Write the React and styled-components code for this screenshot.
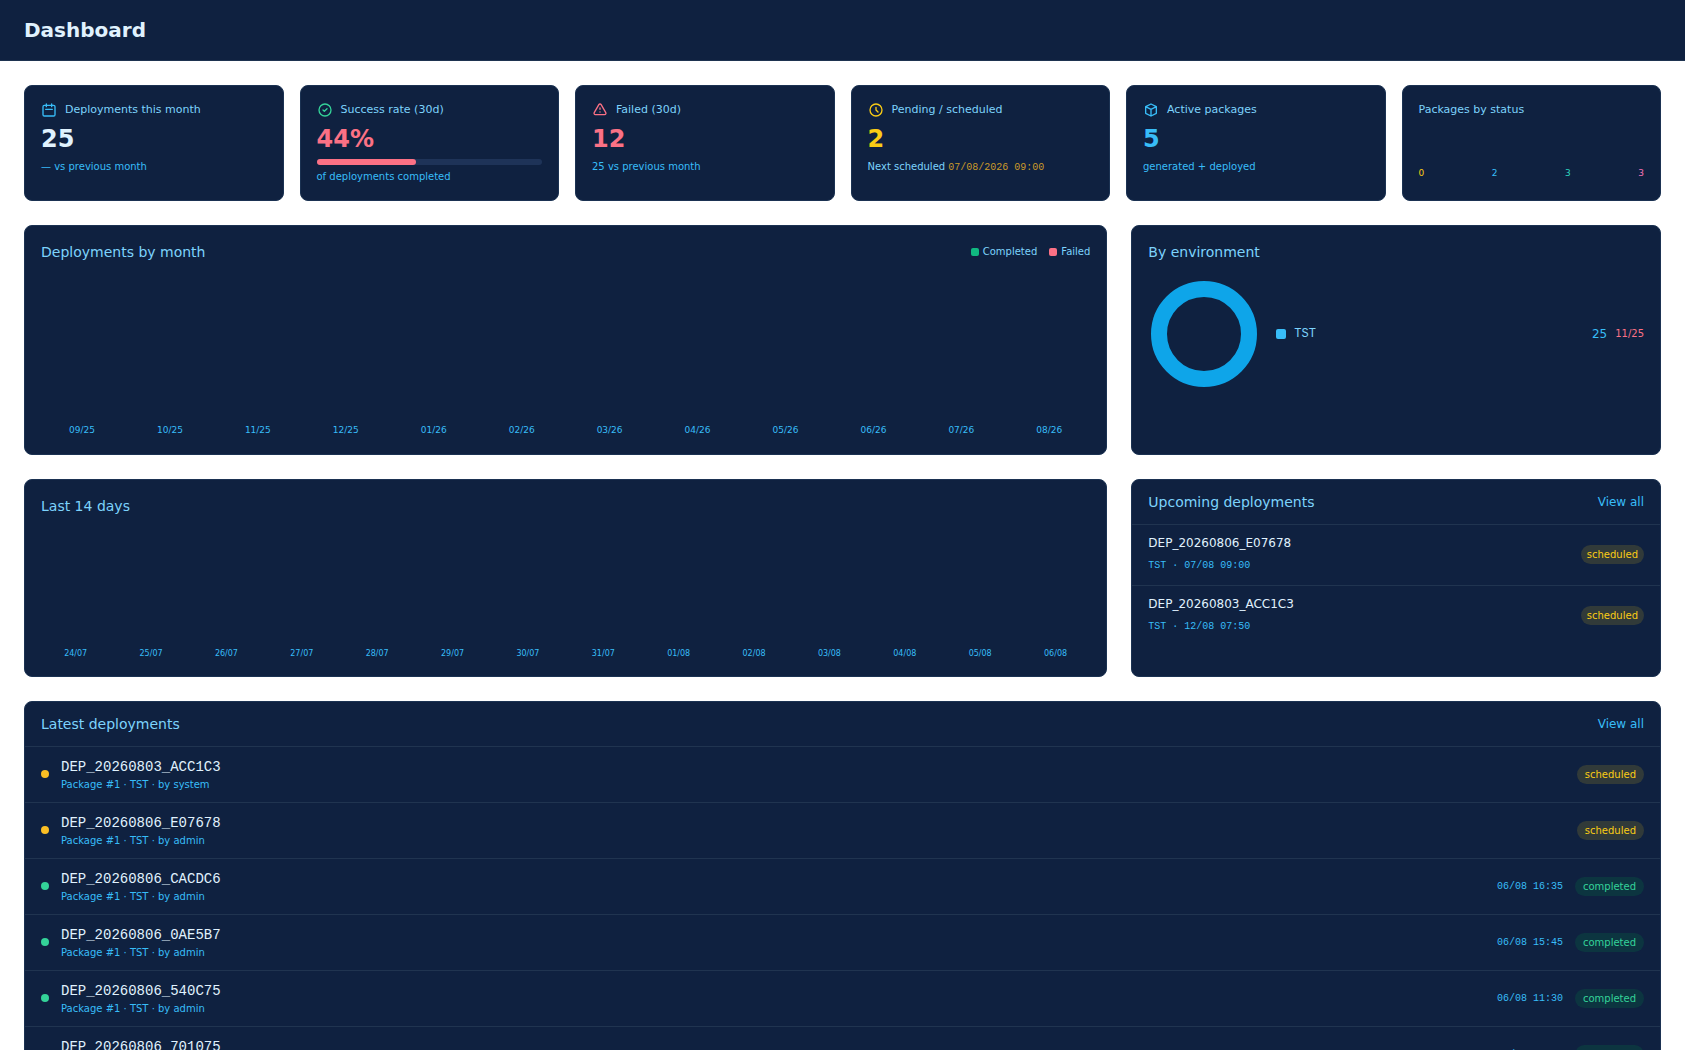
import React from "react";
import styled, { createGlobalStyle } from "styled-components";

const GlobalStyle = createGlobalStyle`
    * {
        box-sizing: border-box;
    }
    body {
        margin: 0;
        background-color: #ffffff;
        font-family: "DejaVu Sans", sans-serif;
        font-size: 14px;
        line-height: 20px;
    }
    h1, h2, p, ul {
        margin: 0;
        padding: 0;
    }
    li {
        list-style: none;
    }
`;

const mono = `"Liberation Mono", monospace`;

const Header = styled.header`
    display: flex;
    align-items: center;
    height: 61px;
    padding: 0 24px;
    background-color: #0f2140;
    border-bottom: 1px solid #1e3350;
`;

const HeaderTitle = styled.h1`
    font-size: 20px;
    line-height: 28px;
    font-weight: bold;
    color: #e0f2fe;
`;

const Main = styled.main`
    display: flex;
    flex-direction: column;
    gap: 24px;
    padding: 24px;
`;

const Card = styled.section`
    background-color: #0f2140;
    border: 1px solid #1b3252;
    border-radius: 8px;
`;

const StatGrid = styled.div`
    display: grid;
    grid-template-columns: repeat(6, 1fr);
    gap: 16px;
`;

const StatCard = styled(Card)`
    display: flex;
    flex-direction: column;
    min-height: 116px;
    padding: 16px 16px 15px;
`;

const StatHead = styled.div`
    display: flex;
    align-items: center;
    gap: 8px;
    margin-bottom: 5px;
    color: ${(props) => props.$color};
`;

const StatName = styled.h2`
    font-size: 11px;
    line-height: 16px;
    font-weight: normal;
    color: #7dd3fc;
`;

const StatValue = styled.p`
    font-size: 24px;
    line-height: 32px;
    font-weight: bold;
    color: ${(props) => props.$color};
`;

const StatNote = styled.p`
    margin-top: 4px;
    font-size: 10px;
    line-height: 16px;
    color: ${(props) => props.$color || "#38bdf8"};
`;

const NextDate = styled.span`
    font-family: ${mono};
    color: #ca9a2a;
`;

const BarTrack = styled.div`
    height: 6px;
    margin-top: 4px;
    border-radius: 3px;
    background-color: #1e3358;
`;

const BarFill = styled.div`
    height: 100%;
    border-radius: 3px;
    background-color: #fb7185;
`;

const StatusCounts = styled.div`
    display: flex;
    justify-content: space-between;
    margin-top: auto;
    padding-bottom: 4px;
    font-size: 9px;
    line-height: 16px;
`;

const StatusCount = styled.span`
    color: ${(props) => props.$color};
`;

const PanelGrid = styled.div`
    display: grid;
    grid-template-columns: repeat(3, 1fr);
    gap: 24px;
`;

const Panel = styled(Card)`
    display: flex;
    flex-direction: column;
    grid-column: span ${(props) => props.$span || 1};
    min-height: ${(props) => props.$height}px;
    padding: 16px;
`;

const PanelHead = styled.div`
    display: flex;
    align-items: center;
    justify-content: space-between;
`;

const PanelTitle = styled.h2`
    font-size: 14px;
    line-height: 20px;
    font-weight: normal;
    color: #7dd3fc;
`;

const Legend = styled.div`
    display: flex;
    gap: 12px;
    font-size: 10px;
    line-height: 16px;
    color: #7dd3fc;
`;

const LegendItem = styled.span`
    display: flex;
    align-items: center;
    gap: 4px;
`;

const Swatch = styled.span`
    width: ${(props) => props.$size}px;
    height: ${(props) => props.$size}px;
    border-radius: 2px;
    background-color: ${(props) => props.$color};
`;

const Axis = styled.div`
    display: flex;
    gap: 6px;
    margin-top: auto;
    font-size: ${(props) => props.$size}px;
    line-height: ${(props) => props.$line}px;
    color: #38bdf8;
`;

const AxisLabel = styled.span`
    flex: 1;
    text-align: center;
`;

const EnvBody = styled.div`
    display: flex;
    align-items: center;
    gap: 16px;
    margin-top: 16px;
`;

const EnvRow = styled.div`
    display: flex;
    align-items: center;
    flex: 1;
    gap: 8px;
    font-size: 12px;
    line-height: 16px;
    color: #38bdf8;
`;

const EnvName = styled.span`
    flex: 1;
    font-family: ${mono};
    color: #7dd3fc;
`;

const EnvRate = styled.span`
    font-size: 10px;
    color: #fb7185;
`;

const ListCard = styled(Card)`
    overflow: hidden;
`;

const ListHead = styled(PanelHead)`
    padding: 12px 16px;
`;

const ViewAll = styled.a`
    font-size: 12px;
    line-height: 16px;
    color: #38bdf8;
    text-decoration: none;
`;

const UpcomingItem = styled.li`
    display: flex;
    align-items: center;
    justify-content: space-between;
    padding: 8px 16px 10px;
    border-top: 1px solid #203450;
`;

const UpcomingName = styled.p`
    font-size: 12px;
    line-height: 20px;
    color: #e0f2fe;
`;

const UpcomingWhen = styled.p`
    margin-top: 4px;
    font-family: ${mono};
    font-size: 10px;
    line-height: 18px;
    color: #38bdf8;
`;

const badgeColors = {
    scheduled: { text: "#facc15", back: "#313a39" },
    completed: { text: "#34d399", back: "#0c3540" },
};

const Badge = styled.span`
    padding: 2px ${(props) => (props.$small ? 6 : 8)}px;
    border-radius: 10px;
    font-size: 10px;
    line-height: 15px;
    color: ${(props) => badgeColors[props.$status].text};
    background-color: ${(props) => badgeColors[props.$status].back};
`;

const LatestItem = styled.li`
    display: flex;
    align-items: center;
    gap: 12px;
    padding: 10px 16px;
    border-top: 1px solid #203450;
`;

const Dot = styled.span`
    width: 8px;
    height: 8px;
    margin-bottom: 1px;
    border-radius: 50%;
    background-color: ${(props) => (props.$status === "scheduled" ? "#fbbf24" : "#34d399")};
`;

const LatestText = styled.div`
    flex: 1;
`;

const LatestName = styled.p`
    font-family: ${mono};
    font-size: 14px;
    line-height: 20px;
    color: #e0f2fe;
`;

const LatestMeta = styled.p`
    font-size: 10px;
    line-height: 15px;
    color: #38bdf8;
`;

const LatestTime = styled.time`
    font-family: ${mono};
    font-size: 10px;
    line-height: 16px;
    color: #38bdf8;
`;

const iconPaths = {
    calendar: "M8 3v4M16 3v4M7 11h10M5 21h14a2 2 0 002-2V7a2 2 0 00-2-2H5a2 2 0 00-2 2v12a2 2 0 002 2z",
    check: "M9 12l2 2 4-4m6 2a9 9 0 11-18 0 9 9 0 0118 0z",
    warning: "M12 9v2m0 4h.01m-6.938 4h13.856c1.54 0 2.502-1.667 1.732-3L13.732 4c-.77-1.333-2.694-1.333-3.464 0L3.34 16c-.77 1.333.192 3 1.732 3z",
    clock: "M12 8v4l3 3m6-3a9 9 0 11-18 0 9 9 0 0118 0z",
    box: "M20 7l-8-4-8 4m16 0l-8 4m8-4v10l-8 4m0-10L4 7m8 4v10M4 7v10l8 4",
};

const StatIcon = ({ name }) => (
    <svg width="16" height="16" viewBox="0 0 24 24" fill="none" stroke="currentColor" strokeWidth="2" strokeLinecap="round" strokeLinejoin="round" aria-hidden="true">
        <path d={iconPaths[name]} />
    </svg>
);

const months = ["09/25", "10/25", "11/25", "12/25", "01/26", "02/26", "03/26", "04/26", "05/26", "06/26", "07/26", "08/26"];

const days = ["24/07", "25/07", "26/07", "27/07", "28/07", "29/07", "30/07", "31/07", "01/08", "02/08", "03/08", "04/08", "05/08", "06/08"];

const packageCounts = [
    { status: "draft", count: 0, color: "#facc15" },
    { status: "generated", count: 2, color: "#38bdf8" },
    { status: "deployed", count: 3, color: "#2dd4bf" },
    { status: "failed", count: 3, color: "#f472b6" },
];

const upcoming = [
    { name: "DEP_20260806_E07678", when: "TST · 07/08 09:00" },
    { name: "DEP_20260803_ACC1C3", when: "TST · 12/08 07:50" },
];

const latest = [
    { name: "DEP_20260803_ACC1C3", by: "system", status: "scheduled" },
    { name: "DEP_20260806_E07678", by: "admin", status: "scheduled" },
    { name: "DEP_20260806_CACDC6", by: "admin", time: "06/08 16:35", status: "completed" },
    { name: "DEP_20260806_0AE5B7", by: "admin", time: "06/08 15:45", status: "completed" },
    { name: "DEP_20260806_540C75", by: "admin", time: "06/08 11:30", status: "completed" },
    { name: "DEP_20260806_701075", by: "admin", time: "06/08 11:15", status: "completed" },
];

function App() {
    const successRate = 44;

    return (
        <>
            <GlobalStyle />
            <Header>
                <HeaderTitle>Dashboard</HeaderTitle>
            </Header>
            <Main>
                <StatGrid>
                    <StatCard>
                        <StatHead $color="#38bdf8">
                            <StatIcon name="calendar" />
                            <StatName>Deployments this month</StatName>
                        </StatHead>
                        <StatValue $color="#e0f2fe">25</StatValue>
                        <StatNote>— vs previous month</StatNote>
                    </StatCard>
                    <StatCard>
                        <StatHead $color="#34d399">
                            <StatIcon name="check" />
                            <StatName>Success rate (30d)</StatName>
                        </StatHead>
                        <StatValue $color="#fb7185">{`${successRate}%`}</StatValue>
                        <BarTrack>
                            <BarFill style={{ width: `${successRate}%` }} />
                        </BarTrack>
                        <StatNote>of deployments completed</StatNote>
                    </StatCard>
                    <StatCard>
                        <StatHead $color="#fb7185">
                            <StatIcon name="warning" />
                            <StatName>Failed (30d)</StatName>
                        </StatHead>
                        <StatValue $color="#fb7185">12</StatValue>
                        <StatNote>25 vs previous month</StatNote>
                    </StatCard>
                    <StatCard>
                        <StatHead $color="#facc15">
                            <StatIcon name="clock" />
                            <StatName>Pending / scheduled</StatName>
                        </StatHead>
                        <StatValue $color="#facc15">2</StatValue>
                        <StatNote $color="#7dd3fc">
                            Next scheduled <NextDate>07/08/2026 09:00</NextDate>
                        </StatNote>
                    </StatCard>
                    <StatCard>
                        <StatHead $color="#38bdf8">
                            <StatIcon name="box" />
                            <StatName>Active packages</StatName>
                        </StatHead>
                        <StatValue $color="#38bdf8">5</StatValue>
                        <StatNote>generated + deployed</StatNote>
                    </StatCard>
                    <StatCard>
                        <StatName>Packages by status</StatName>
                        <StatusCounts>
                            {packageCounts.map((item) => (
                                <StatusCount key={item.status} $color={item.color}>
                                    {item.count}
                                </StatusCount>
                            ))}
                        </StatusCounts>
                    </StatCard>
                </StatGrid>

                <PanelGrid>
                    <Panel $span={2} $height={230}>
                        <PanelHead>
                            <PanelTitle>Deployments by month</PanelTitle>
                            <Legend>
                                <LegendItem>
                                    <Swatch $size={8} $color="#10b981" />
                                    Completed
                                </LegendItem>
                                <LegendItem>
                                    <Swatch $size={8} $color="#fb7185" />
                                    Failed
                                </LegendItem>
                            </Legend>
                        </PanelHead>
                        <Axis $size={9} $line={16}>
                            {months.map((month) => (
                                <AxisLabel key={month}>{month}</AxisLabel>
                            ))}
                        </Axis>
                    </Panel>
                    <Panel $height={230}>
                        <PanelTitle>By environment</PanelTitle>
                        <EnvBody>
                            <svg width="112" height="112" viewBox="0 0 112 112" role="img" aria-label="TST 25">
                                <circle cx="56" cy="56" r="45" fill="none" stroke="#0ea5e9" strokeWidth="16" />
                            </svg>
                            <EnvRow>
                                <Swatch $size={10} $color="#38bdf8" />
                                <EnvName>TST</EnvName>
                                <span>25</span>
                                <EnvRate>11/25</EnvRate>
                            </EnvRow>
                        </EnvBody>
                    </Panel>
                </PanelGrid>

                <PanelGrid>
                    <Panel $span={2} $height={198}>
                        <PanelTitle>Last 14 days</PanelTitle>
                        <Axis $size={8} $line={12}>
                            {days.map((day) => (
                                <AxisLabel key={day}>{day}</AxisLabel>
                            ))}
                        </Axis>
                    </Panel>
                    <ListCard>
                        <ListHead>
                            <PanelTitle>Upcoming deployments</PanelTitle>
                            <ViewAll href="#upcoming">View all</ViewAll>
                        </ListHead>
                        <ul>
                            {upcoming.map((item) => (
                                <UpcomingItem key={item.name}>
                                    <div>
                                        <UpcomingName>{item.name}</UpcomingName>
                                        <UpcomingWhen>{item.when}</UpcomingWhen>
                                    </div>
                                    <Badge $status="scheduled" $small>scheduled</Badge>
                                </UpcomingItem>
                            ))}
                        </ul>
                    </ListCard>
                </PanelGrid>

                <ListCard>
                    <ListHead>
                        <PanelTitle>Latest deployments</PanelTitle>
                        <ViewAll href="#latest">View all</ViewAll>
                    </ListHead>
                    <ul>
                        {latest.map((item) => (
                            <LatestItem key={item.name}>
                                <Dot $status={item.status} />
                                <LatestText>
                                    <LatestName>{item.name}</LatestName>
                                    <LatestMeta>{`Package #1 · TST · by ${item.by}`}</LatestMeta>
                                </LatestText>
                                {item.time && <LatestTime>{item.time}</LatestTime>}
                                <Badge $status={item.status}>{item.status}</Badge>
                            </LatestItem>
                        ))}
                    </ul>
                </ListCard>
            </Main>
        </>
    );
}

export default App;
